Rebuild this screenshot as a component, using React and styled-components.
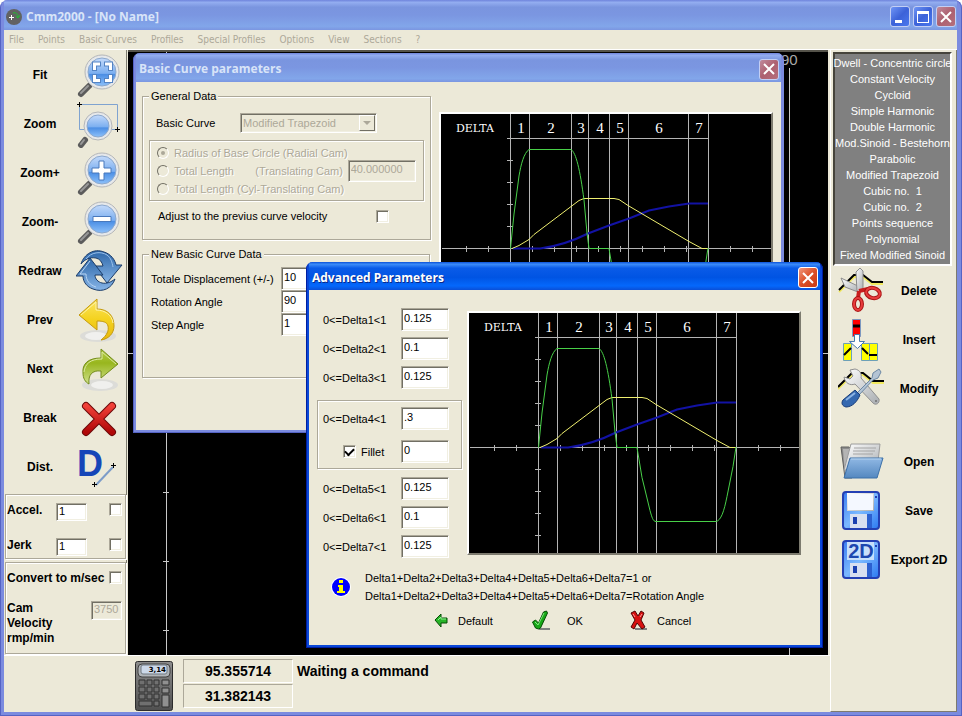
import React from 'react';
import styled, { createGlobalStyle, css } from 'styled-components';

const GlobalStyle = createGlobalStyle`
  * {
    box-sizing: border-box;
  }
  body {
    margin: 0;
    background: #fff;
    color: #000;
    font-family: 'Liberation Sans', Arial, sans-serif;
    font-size: 11px;
    line-height: 14px;
  }
  button, input, select {
    font: inherit;
    color: inherit;
  }
`;

const face = '#ece9d8';
const shade = '#aca899';

const etched = css`
  border: 1px solid ${shade};
  box-shadow: 1px 1px 0 #fff, inset 1px 1px 0 #fff;
`;

const sunken = css`
  border: 1px solid;
  border-color: ${shade} #fff #fff ${shade};
  box-shadow: inset 1px 1px 0 #716f64, inset -1px -1px 0 #f1efe2;
`;

const Shell = styled.div`
  display: flex;
  flex-direction: column;
  min-height: 100vh;
  padding: 0 5px 4px 4px;
  border-radius: 8px 8px 0 0;
  background: #7b8bdf;
  box-shadow: inset 1px -1px 0 #5563c4, inset -1px 0 0 #5563c4;
  overflow: hidden;
`;

const TitleBar = styled.header`
  display: flex;
  align-items: center;
  gap: 4px;
  height: ${(props) => (props.$main ? 30 : props.$active ? 28 : 29)}px;
  padding: ${(props) => (props.$main ? '3px 1px 0 2px' : '3px 2px 0 3px')};
  background: ${(props) =>
    props.$active
      ? 'linear-gradient(#0a50d8, #3c8cf8 8%, #0a5be8 22%, #0054e3 55%, #0468fc 85%, #0a4fd8)'
      : 'linear-gradient(#6f84dc, #93adf0 8%, #7a95df 24%, #7b96e1 50%, #82a6ea 88%, #7b96e1)'};
`;

const TitleText = styled.h1`
  flex: 1;
  margin: 0;
  color: ${(props) => (props.$active ? '#fff' : '#d8e4f8')};
  font-family: 'Open Sans', 'Noto Sans', sans-serif;
  font-size: 12px;
  font-weight: 700;
  line-height: 16px;
  text-shadow: ${(props) => (props.$active ? '1px 1px 0 #0a2a8a' : 'none')};
`;

const captionColors = {
  blue: 'linear-gradient(135deg, #6f95f5, #3c62d8 50%, #4a78ee)',
  faded: 'linear-gradient(135deg, #c08a9c, #ad6070 50%, #b5707c)',
  red: 'linear-gradient(135deg, #f0977c, #dc4f28 50%, #c83a14)',
};

const CaptionButton = styled.button`
  display: grid;
  place-items: center;
  width: 20px;
  height: 21px;
  padding: 0;
  border: 1px solid ${(props) => (props.$tone === 'red' ? '#fff' : '#c3cff4')};
  border-radius: 3px;
  background: ${(props) => captionColors[props.$tone]};
`;

const CaptionGroup = styled.div`
  display: flex;
  gap: 3px;
`;

const MenuBar = styled.nav`
  display: flex;
  gap: 14px;
  height: 19px;
  padding: 2px 5px;
  background: ${face};
`;

const MenuButton = styled.button`
  padding: 0;
  border: 0;
  background: none;
  color: ${shade};
  font-family: 'DejaVu Sans Condensed', 'DejaVu Sans', sans-serif;
  font-size: 10px;
  white-space: nowrap;
`;

const Body = styled.div`
  flex: 1;
  display: flex;
  background: ${face};
  border-top: 1px solid #fff;
`;

const Main = styled.main`
  flex: 1;
  display: flex;
  flex-direction: column;
  min-width: 0;
`;

const Work = styled.div`
  flex: 1;
  display: flex;
`;

const Sidebar = styled.aside`
  display: flex;
  flex-direction: column;
  width: 123px;
  border-right: 1px solid #7d7b6f;
`;

const ToolButton = styled.button`
  display: grid;
  grid-template-columns: ${(props) => props.$columns};
  align-items: center;
  width: 100%;
  height: 49px;
  padding: 0;
  border: 0;
  background: none;
  font-size: 12px;
  font-weight: 700;
  text-align: center;

  svg {
    display: block;
  }
`;

const Panel = styled.section`
  ${etched}
  display: flex;
  flex-direction: column;
  gap: ${(props) => props.$gap}px;
  margin: 3px 0 0 1px;
  padding: ${(props) => props.$pad};
  font-size: 12px;
  font-weight: 700;
  line-height: 15px;
`;

const PanelRow = styled.div`
  display: flex;
  align-items: flex-start;

  > :last-child {
    margin-left: auto;
  }
`;

const PanelLabel = styled.label`
  width: ${(props) => props.$width}px;
`;

const TextBox = styled.input`
  ${sunken}
  width: ${(props) => props.$width}px;
  height: ${(props) => props.$height}px;
  padding: 0 2px 3px;
  border-radius: 0;
  background: #fff;
  font-size: 11px;
  font-weight: 400;
  outline: none;

  &:disabled {
    background: ${face};
    color: ${shade};
  }
`;

const Check = styled.input.attrs({ type: 'checkbox' })`
  ${sunken}
  appearance: none;
  display: grid;
  place-items: center;
  width: 13px;
  height: 13px;
  margin: 0;
  background: #fff;

  &:checked::before {
    content: '';
    width: 7px;
    height: 4px;
    margin-top: -2px;
    border: solid #000;
    border-width: 0 0 2px 2px;
    transform: rotate(-45deg);
  }
`;

const Canvas = styled.div`
  position: relative;
  flex: 1;
  min-height: 604px;
  margin: 0 2px 0 1px;
  border-top: 2px solid #55534a;
  background: #000;
  overflow: hidden;
`;

const Backdrop = styled.svg`
  position: absolute;
  top: 0;
  left: 0;
  width: 100%;
  height: 100%;
`;

const Dialog = styled.section`
  position: absolute;
  top: ${(props) => props.$top}px;
  left: ${(props) => props.$left}px;
  padding: 0 3px 3px;
  border-radius: 7px 7px 0 0;
  background: ${(props) => (props.$active ? '#0a48d8' : '#7b8bdf')};
  box-shadow: ${(props) =>
    props.$active ? 'inset 1px -1px 0 #001ea0, inset -1px 0 0 #001ea0' : 'inset 1px -1px 0 #5563c4'};
  overflow: hidden;
`;

const BasicBody = styled.div`
  display: flex;
  gap: 8px;
  padding: 7px 8px 52px 6px;
  background: ${face};
`;

const Column = styled.div`
  display: flex;
  flex-direction: column;
  gap: ${(props) => props.$gap}px;
`;

const Group = styled.fieldset`
  ${etched}
  width: 288px;
  height: ${(props) => props.$height}px;
  margin: 0;
  padding: ${(props) => props.$top}px 6px 0;

  legend {
    padding: 0 2px;
    background: ${face};
  }
`;

const SelectRow = styled.div`
  display: grid;
  grid-template-columns: 84px 137px;
  align-items: center;
  padding-left: 7px;
`;

const SelectBox = styled.div`
  ${sunken}
  display: flex;
  height: 20px;
  padding: 1px;

  select {
    appearance: none;
    flex: 1;
    min-width: 0;
    padding: 0 0 0 1px;
    border: 0;
    background: transparent;
    color: ${shade};
    opacity: 1;
  }
`;

const DropMark = styled.span`
  display: grid;
  place-items: center;
  width: 16px;
  border: 1px solid;
  border-color: #fff #716f64 #716f64 #fff;
`;

const RadioBox = styled.div`
  ${etched}
  display: flex;
  align-items: center;
  justify-content: space-between;
  margin-top: 7px;
  padding: 3px 7px;
  height: 61px;
`;

const RadioLabel = styled.label`
  display: flex;
  align-items: center;
  gap: 5px;
  height: 18px;
  color: ${shade};
  text-shadow: 1px 1px 0 #fff;
  white-space: pre;

  input {
    appearance: none;
    display: grid;
    place-items: center;
    width: 12px;
    height: 12px;
    margin: 0;
    border: 1px solid;
    border-color: #716f64 #fff #fff #716f64;
    border-radius: 50%;
  }
  input:checked::before {
    content: '';
    width: 4px;
    height: 4px;
    border-radius: 50%;
    background: ${shade};
  }
`;

const AdjustRow = styled.div`
  display: flex;
  align-items: center;
  justify-content: space-between;
  padding: 8px 35px 0 9px;
`;

const FieldRow = styled.div`
  display: grid;
  grid-template-columns: ${(props) => props.$label}px auto;
  align-items: center;
  justify-content: start;
  padding-left: ${(props) => props.$indent}px;
  white-space: nowrap;
`;

const PlotFrame = styled.figure`
  align-self: flex-start;
  margin: ${(props) => props.$top}px 0 0;
  border: 2px solid;
  border-color: #fff #7d7b6f #7d7b6f #fff;

  svg {
    display: block;
    background: #000;
  }
`;

const AdvancedBody = styled.div`
  padding: 18px 19px 13px 8px;
  background: ${face};
`;

const AdvancedTop = styled.div`
  display: flex;
  gap: 5px;
`;

const FilletBox = styled.div`
  ${etched}
  display: flex;
  flex-direction: column;
  gap: 10px;
  width: 145px;
  margin: 5px 0 2px;
  padding: 6px 0 5px;
`;

const FilletLabel = styled.label`
  display: flex;
  align-items: center;
  gap: 5px;
  padding-left: 20px;
`;

const Note = styled.div`
  display: flex;
  align-items: center;
  gap: 14px;
  padding: 11px 0 0 14px;

  p {
    margin: 0;
    line-height: 18px;
  }
`;

const ActionBar = styled.div`
  display: flex;
  padding: 5px 0 0 117px;
`;

const ActionButton = styled.button`
  display: flex;
  align-items: center;
  gap: ${(props) => props.$gap}px;
  width: 98px;
  height: 22px;
  padding: 0;
  border: 0;
  background: none;
`;

const StatusBar = styled.footer`
  display: flex;
  align-items: flex-start;
  gap: 4px;
  height: 57px;
  padding: 3px 0 0 131px;
  border-top: 1px solid #fff;
  font-size: 14px;
  font-weight: 700;
`;

const CalcButton = styled.button`
  margin: 2px 6px 0 0;
  padding: 0;
  border: 0;
  background: none;

  svg {
    display: block;
  }
`;

const Readouts = styled.div`
  display: flex;
  flex-direction: column;
  gap: 1px;
`;

const Readout = styled.output`
  width: 110px;
  height: 24px;
  border: 1px solid;
  border-color: ${shade} #fff #fff ${shade};
  line-height: 22px;
  text-align: center;
`;

const Message = styled.span`
  line-height: 24px;
`;

const RightPanel = styled.aside`
  width: 127px;
  padding: 2px 4px 0 2px;
  border-left: 1px solid #fff;
  border-right: 1px solid #7d7b6f;
  border-bottom: 1px solid #7d7b6f;
`;

const CurveList = styled.ul`
  margin: 0;
  padding: 1px 0;
  border: 2px solid;
  border-color: #46443c #fff #fff #46443c;
  background: #808080;
  list-style: none;

  li {
    display: flex;
    justify-content: center;
  }
  button {
    flex: none;
    height: 16px;
    padding: 0;
    border: 0;
    background: none;
    color: #fff;
    white-space: pre;
  }
`;

const FileTools = styled.div`
  margin-top: 24px;
`;

const HiddenDefs = styled.svg`
  position: absolute;
`;

const Cross = ({ x, y }) => (
  <path d={`M${x - 2} ${y + 0.5}h5M${x + 0.5} ${y - 2}v5`} stroke="#000" fill="none" shapeRendering="crispEdges" />
);

const Gradients = () => (
  <HiddenDefs width="0" height="0" aria-hidden="true">
    <defs>
      <linearGradient id="lens" x2="0" y2="1">
        <stop offset="0" stopColor="#c4dafa" />
        <stop offset="0.55" stopColor="#7aaef0" />
        <stop offset="0.58" stopColor="#4b8ee4" />
        <stop offset="1" stopColor="#8cc0fa" />
      </linearGradient>
      <linearGradient id="blueArrow" x2="0" y2="1">
        <stop offset="0" stopColor="#2c66a8" />
        <stop offset="1" stopColor="#86b4e6" />
      </linearGradient>
      <linearGradient id="yellowArrow" x2="0" y2="1">
        <stop offset="0" stopColor="#fbe560" />
        <stop offset="0.5" stopColor="#f4d21e" />
        <stop offset="1" stopColor="#e8b80c" />
      </linearGradient>
      <linearGradient id="greenArrow" x2="0" y2="1">
        <stop offset="0" stopColor="#b6cf48" />
        <stop offset="0.4" stopColor="#98b61e" />
        <stop offset="1" stopColor="#cfe08a" />
      </linearGradient>
      <linearGradient id="redCross" x2="0" y2="1">
        <stop offset="0" stopColor="#f04038" />
        <stop offset="1" stopColor="#b00808" />
      </linearGradient>
      <linearGradient id="steel" x2="1" y2="1">
        <stop offset="0" stopColor="#ffffff" />
        <stop offset="1" stopColor="#a8acb0" />
      </linearGradient>
      <linearGradient id="disk" x2="1" y2="1">
        <stop offset="0" stopColor="#3a7cf0" />
        <stop offset="0.5" stopColor="#7ab8ff" />
        <stop offset="1" stopColor="#2a78f0" />
      </linearGradient>
      <linearGradient id="folder" x2="0" y2="1">
        <stop offset="0" stopColor="#90b8e4" />
        <stop offset="1" stopColor="#5488c0" />
      </linearGradient>
      <linearGradient id="calc" x2="0" y2="1">
        <stop offset="0" stopColor="#8c8c8c" />
        <stop offset="1" stopColor="#505050" />
      </linearGradient>
    </defs>
  </HiddenDefs>
);

const Icon = ({ children }) => (
  <svg width="48" height="48" viewBox="0 0 48 48" aria-hidden="true">
    {children}
  </svg>
);

const Lens = ({ cx = 26, cy = 21, r = 17, children }) => (
  <>
    <path d={`M${cx - 13} ${cy + 14}L5 ${cy + r + 5}`} stroke="#5c5c5c" strokeWidth="6" strokeLinecap="round" />
    <path d={`M${cx - 14} ${cy + 14}L5 ${cy + r + 4}`} stroke="#989898" strokeWidth="2" strokeLinecap="round" />
    <circle cx={cx} cy={cy} r={r} fill="#e6e8ea" stroke="#b4b6b8" />
    <circle cx={cx} cy={cy} r={r - 3} fill="url(#lens)" stroke="#8ca8cc" />
    {children}
  </>
);

const FitIcon = () => (
  <Icon>
    <Lens>
      <g fill="none" stroke="#5484c4" strokeWidth="5">
        <path d="M18.500 20v-7H25M28 13h6.500v7M34.500 23v6.500H28M25 29.500h-6.500V23" />
      </g>
      <g fill="none" stroke="#fff" strokeWidth="3">
        <path d="M18.500 19v-6H24M29 13h5.500v6M34.500 24v5.500H29M24 29.500h-5.500V24" />
      </g>
    </Lens>
  </Icon>
);

const ZoomIcon = () => (
  <Icon>
    <path d="M3.500 4.500h38v25h-38z" fill="none" stroke="#7fa3d0" />
    <Lens cx={22} cy={26} r={14} />
    <Cross x={3} y={4} />
    <Cross x={41} y={29} />
  </Icon>
);

const ZoomInIcon = () => (
  <Icon>
    <Lens>
      <path d="M23 12h5v7h7v5h-7v7h-5v-7h-7v-5h7z" fill="#fff" stroke="#4878bc" />
    </Lens>
  </Icon>
);

const ZoomOutIcon = () => (
  <Icon>
    <Lens>
      <path d="M17 18.500h18v5h-18z" fill="#fff" stroke="#4878bc" />
    </Lens>
  </Icon>
);

const RedrawIcon = () => (
  <Icon>
    <g fill="url(#blueArrow)" stroke="#1c3c68" strokeLinejoin="round">
      <path d="M5 17C8 7 18 1 28 5c7 2 11 8 12 13h6L31 36 18 19h9c-1-4-3-7-7-8-6-1-11 1-15 6z" />
      <path d="M39 32c-3 9-12 14-22 10C11 40 7 35 7 29H0L14 11l13 17h-8c0 4 3 7 7 8 5 1 9-1 13-4z" />
    </g>
    <path d="M10 12c5-7 15-8 21-4 4 3 5 7 6 12" fill="none" stroke="#9cc2ec" />
    <path d="M14 14l-10 13h6c0 7 4 11 10 13" fill="none" stroke="#b8d4f2" />
  </Icon>
);

const PrevIcon = () => (
  <Icon>
    <ellipse cx="22" cy="40" rx="18" ry="6" fill="#dcdcd8" />
    <ellipse cx="20" cy="40" rx="11" ry="4" fill="#f0f0ee" />
    <path
      d="M3 19L21 3v10c11 0 17 7 17 17 0 7-5 13-13 14 6-5 8-9 7-14-1-4-5-5-11-5v9z"
      fill="url(#yellowArrow)"
      stroke="#c49a10"
      strokeLinejoin="round"
    />
    <path d="M5 19L20 6v8c9 0 16 5 17 13" fill="none" stroke="#fdf3a8" />
  </Icon>
);

const NextIcon = () => (
  <Icon>
    <ellipse cx="24" cy="40" rx="18" ry="6" fill="#dcdcd8" />
    <ellipse cx="26" cy="40" rx="11" ry="4" fill="#f0f0ee" />
    <path
      d="M42 19L25 4v9C12 13 6 19 7 28c0 5 2 9 6 11-1-9 3-14 12-13v7z"
      fill="url(#greenArrow)"
      stroke="#748c1c"
      strokeLinejoin="round"
    />
    <path d="M40 19L26 7v7C14 14 9 19 8 27" fill="none" stroke="#dbe8a0" />
  </Icon>
);

const BreakIcon = () => (
  <Icon>
    <path d="M10 12l26 26M36 12L10 38" stroke="#6c0808" strokeWidth="8" strokeLinecap="round" />
    <path d="M10 12l26 26M36 12L10 38" stroke="url(#redCross)" strokeWidth="6" strokeLinecap="round" />
  </Icon>
);

const DistIcon = () => (
  <Icon>
    <text x="1" y="33" fill="#1646b8" fontFamily="Liberation Sans, sans-serif" fontSize="36" fontWeight="700">
      D
    </text>
    <path d="M20 42l17-18" stroke="#7c9cc8" strokeWidth="2" />
    <Cross x={37} y={22} />
    <Cross x={18} y={41} />
  </Icon>
);

const Profile = ({ d }) => (
  <>
    <path d={d} transform="translate(0 2)" fill="none" stroke="#f2ea60" strokeWidth="2" />
    <path d={d} fill="none" stroke="#000" strokeWidth="2" />
  </>
);

const DeleteIcon = () => (
  <Icon>
    <Profile d="M1 23L16 8h9l9 7h11" />
    <path d="M3 11l19 9-2 5-13-5z" fill="url(#steel)" stroke="#8c8c8c" />
    <path d="M18 5l4-4 3 3v19l-6 2z" fill="url(#steel)" stroke="#8c8c8c" />
    <path d="M21 24l9-2M21 24l-1 7" stroke="#c81e1e" strokeWidth="4" />
    <ellipse cx="35" cy="26" rx="7" ry="5" transform="rotate(15 35 26)" fill="none" stroke="#a81414" strokeWidth="4" />
    <ellipse cx="35" cy="26" rx="7" ry="5" transform="rotate(15 35 26)" fill="none" stroke="#e83c3c" strokeWidth="2" />
    <ellipse cx="20" cy="37" rx="4" ry="6" fill="none" stroke="#a81414" strokeWidth="4" />
    <ellipse cx="20" cy="37" rx="4" ry="6" fill="none" stroke="#e83c3c" strokeWidth="2" />
  </Icon>
);

const InsertIcon = () => (
  <Icon>
    <path d="M14.500 3.500h8v17h-8z" fill="#f00" stroke="#7c98c0" />
    <path d="M15 10h7" stroke="#000" strokeWidth="3" />
    <path d="M5.500 27.500h8v17h-8zM23.500 27.500h8v17h-8zM31.500 27.500h8v17h-8z" fill="#ff0" stroke="#6ca0b8" />
    <path d="M6 39l7-7M24 32l6 6M31 39h8" stroke="#000" strokeWidth="2" />
    <path d="M16.500 18.500h5v7h5l-7 7-8-7h5z" fill="#fff" stroke="#4878b0" />
  </Icon>
);

const ModifyIcon = () => (
  <Icon>
    <Profile d="M0 22L14 8h11l10 8h11" />
    <path
      d="M12 5l5-1c5 1 7 5 6 9l18 21c1 4-3 7-6 4L17 19c-5 2-10-1-11-7l6 2 3-3z"
      fill="url(#steel)"
      stroke="#909090"
    />
    <circle cx="38" cy="36" r="1" fill="#707070" />
    <path d="M19 28L34 13l1-5 6-4 2 3-3 6-5 2-14 15z" fill="#b4c4d4" stroke="#6c88a4" />
    <path d="M17 25l5 5c-3 7-8 12-14 12-4-1-5-4-3-7z" fill="#3468b0" stroke="#183c78" />
    <path d="M17 28L8 35" stroke="#8cb4e4" strokeWidth="2" />
  </Icon>
);

const OpenIcon = () => (
  <Icon>
    <path d="M3 9h8l3 3v28H7z" fill="#8c8c8c" stroke="#606060" />
    <path d="M5 11h6v22l-4 4z" fill="#b4b4b4" />
    <path d="M13 6h29l-3 26H6z" fill="url(#steel)" stroke="#9c9c9c" />
    <path d="M16 10h22M15 13h22M15 16h20" stroke="#a4a4a4" />
    <path d="M12 20h33l-6 20H6z" fill="url(#folder)" stroke="#3c70a8" strokeLinejoin="round" />
    <path d="M13 21h30" stroke="#b8d4f0" />
  </Icon>
);

const DiskIcon = ({ label }) => (
  <Icon>
    <rect x="5" y="5" width="36" height="37" rx="3" fill="url(#disk)" stroke="#2440b4" strokeWidth="2" />
    <path d="M9 6h27v18H9z" fill={label ? '#c8e0fa' : 'url(#steel)'} />
    {!label && <path d="M10 7h25v16H10z" fill="#f4f8ff" />}
    <path d="M12 27h22v14H12z" fill="#d8dff0" />
    <path d="M29 27h5v14h-5z" fill="#2c60d0" />
    <path d="M15 30h4v7h-4z" fill="#1c40b0" />
    <path d="M37 9h2v2h-2z" fill="#2440b4" />
    {label && (
      <text
        x="23"
        y="22"
        textAnchor="middle"
        fill="#1c48b0"
        fontFamily="Liberation Sans, sans-serif"
        fontSize="20"
        fontWeight="700"
      >
        {label}
      </text>
    )}
  </Icon>
);

const AppIcon = () => (
  <svg width="16" height="16" viewBox="0 0 16 16" aria-hidden="true">
    <circle cx="8" cy="8" r="8" fill="#626262" />
    <path d="M3 8.500h5M5.500 6v5" stroke="#fff" fill="none" />
    <path d="M7 4c3-1 5 1 5 4M9.500 7L12 9l2-3" stroke="#20c030" fill="none" />
  </svg>
);

const CalcIcon = () => (
  <svg width="38" height="50" viewBox="0 0 38 50" aria-hidden="true">
    <rect x="0.5" y="0.5" width="37" height="49" rx="2" fill="url(#calc)" stroke="#2c2c2c" />
    <rect x="3" y="3" width="32" height="13" rx="4" fill="#b0b4b8" stroke="#404040" />
    <rect x="6" y="4" width="26" height="9" rx="2" fill="#ccd8e8" stroke="#707880" />
    <text x="31" y="11" textAnchor="end" fontFamily="DejaVu Sans, sans-serif" fontSize="7" fontWeight="700">
      3,14
    </text>
    <path
      d="M4 19h6v5H4zM12 19h5v5h-5zM19 19h5v5h-5zM4 26h6v5H4zM12 26h5v5h-5zM19 26h5v5h-5zM4 33h6v5H4zM12 33h5v5h-5zM19 33h5v5h-5zM4 40h13v5H4zM19 40h5v5h-5z"
      fill="#707070"
      stroke="#303030"
    />
    <path d="M27 19h7v5h-7zM27 27h7v5h-7zM27 34h7v12h-7z" fill="#909090" stroke="#303030" />
  </svg>
);

const CloseGlyph = () => (
  <svg width="12" height="12" viewBox="0 0 12 12" aria-hidden="true">
    <path d="M1 1l10 10M11 1L1 11" stroke="#fff" strokeWidth="2" />
  </svg>
);

const InfoIcon = () => (
  <svg width="20" height="20" viewBox="0 0 20 20" aria-hidden="true">
    <circle cx="10" cy="10" r="10" fill="#fff" />
    <circle cx="10" cy="10" r="9" fill="#00f" />
    <path d="M8 3h4v3H8zM7 8h5v6h2v2H6v-2h2v-4H7z" fill="#ff0" />
  </svg>
);

const DefaultIcon = () => (
  <svg width="20" height="22" viewBox="0 0 20 22" aria-hidden="true">
    <path d="M1 10l6-6v4h6v5H7v4z" fill="#28b428" stroke="#044c04" />
    <path d="M4 10l3-3v2h5" fill="none" stroke="#90f090" />
  </svg>
);

const OkIcon = () => (
  <svg width="20" height="22" viewBox="0 0 20 22" aria-hidden="true">
    <path d="M7 19h11" stroke="#808080" strokeWidth="2" />
    <path d="M0.500 12l3-2 3 3 5-11 3-1 1 2-7 15-2 1-3-1z" fill="#18a818" stroke="#044c04" />
    <path d="M3 12l3 3 6-12" fill="none" stroke="#80e880" />
  </svg>
);

const CancelIcon = () => (
  <svg width="20" height="22" viewBox="0 0 20 22" aria-hidden="true">
    <path d="M5 19h12" stroke="#808080" strokeWidth="2" />
    <path
      d="M1 3l4-2 3 5 3-5 3 2-3 7 4 7-3 2-5-6-3 6-3-2 4-7z"
      fill="#d81010"
      stroke="#500404"
      strokeLinejoin="round"
    />
    <path d="M3 4l2 3M12 4l-2 3" stroke="#ff9c9c" />
  </svg>
);

const columns = [69, 88, 130, 147, 168, 187, 247, 267];
const xTicks = [25, 47, 91, 113, 135, 157, 179, 201, 223, 245, 289, 311];
const yTicks = [46, 68, 90, 112, 156, 178, 200, 222];

const CurvePlot = ({ top }) => (
  <PlotFrame $top={top}>
    <svg width="330" height="240" viewBox="0 0 330 240" role="img" aria-label="Curve diagram">
      <g stroke="#b4b4b4" fill="none" shapeRendering="crispEdges">
        {columns.map((x) => (
          <path key={x} d={`M${x + 0.5} 0v240`} />
        ))}
        <path d="M66 24.500h202M1 134.500h329" />
        {xTicks.map((x) => (
          <path key={x} d={`M${x + 0.5} 132v6`} />
        ))}
        {yTicks.map((y) => (
          <path key={y} d={`M66 ${y + 0.5}h6`} />
        ))}
      </g>
      <g fill="none">
        <path d="M72 134.500h27c16-2 34-8 48-15l21-8 20-7 20-8 20-4 20-3 19 0" stroke="#1212a4" strokeWidth="2" />
        <path d="M71 134.500l7-3 10-6 5-5 45-34 5-2h30l5 1 9 6 61 36 13 7h6" stroke="#f0f070" />
        <path
          d="M69.500 134.500L73 100l5-38c2-12 5-23 10-26.500h42c5 3 9 20 13 50.500l3 33 2 15.500h20l5 30 8 33c2 7 3 11 6 11h60c5-1 8-10 11-25l6-30 3-19.500"
          stroke="#48d048"
        />
      </g>
      <text x="15" y="18" fill="#fff" fontFamily="DejaVu Serif, serif" fontSize="11">
        DELTA
      </text>
      <g fill="#fff" fontFamily="Liberation Serif, serif" fontSize="15" textAnchor="middle">
        {columns.slice(1).map((x, i) => (
          <text key={x} x={Math.round((x + columns[i]) / 2) + 1} y="19">
            {i + 1}
          </text>
        ))}
      </g>
    </svg>
  </PlotFrame>
);

const menus = ['File', 'Points', 'Basic Curves', 'Profiles', 'Special Profiles', 'Options', 'View', 'Sections', '?'];

const tools = [
  ['Fit', FitIcon],
  ['Zoom', ZoomIcon],
  ['Zoom+', ZoomInIcon],
  ['Zoom-', ZoomOutIcon],
  ['Redraw', RedrawIcon],
  ['Prev', PrevIcon],
  ['Next', NextIcon],
  ['Break', BreakIcon],
  ['Dist.', DistIcon],
];

const curves = [
  'Dwell - Concentric circle',
  'Constant Velocity',
  'Cycloid',
  'Simple Harmonic',
  'Double Harmonic',
  'Mod.Sinoid - Bestehorn',
  'Parabolic',
  'Modified Trapezoid',
  'Cubic no.  1',
  'Cubic no.  2',
  'Points sequence',
  'Polynomial',
  'Fixed Modified Sinoid',
];

const bases = [
  'Radius of Base Circle (Radial Cam)',
  'Total Length       (Translating Cam)',
  'Total Length (Cyl-Translating Cam)',
];

const newData = [
  { id: 'displacement', label: 'Totale Displacement (+/-)', value: '10' },
  { id: 'rotation', label: 'Rotation Angle', value: '90' },
  { id: 'step', label: 'Step Angle', value: '1' },
];

const RightTool = ({ name, children }) => (
  <ToolButton type="button" $columns="5px 48px 1fr">
    <span />
    {children}
    {name}
  </ToolButton>
);

const SideTools = () => (
  <Sidebar>
    {tools.map(([name, Glyph]) => (
      <ToolButton key={name} type="button" $columns="72px 48px">
        {name}
        <Glyph />
      </ToolButton>
    ))}
    <Panel $gap={17} $pad="8px 3px 2px 1px">
      <PanelRow>
        <PanelLabel htmlFor="accel" $width={49}>
          Accel.
        </PanelLabel>
        <TextBox id="accel" $width={31} $height={18} defaultValue="1" />
        <Check aria-label="Accel." />
      </PanelRow>
      <PanelRow>
        <PanelLabel htmlFor="jerk" $width={49}>
          Jerk
        </PanelLabel>
        <TextBox id="jerk" $width={31} $height={18} defaultValue="1" />
        <Check aria-label="Jerk" />
      </PanelRow>
    </Panel>
    <Panel $gap={15} $pad="8px 3px 7px 1px">
      <PanelRow>
        <label htmlFor="convert">Convert to m/sec</label>
        <Check id="convert" />
      </PanelRow>
      <PanelRow>
        <PanelLabel htmlFor="velocity" $width={60}>
          Cam Velocity rmp/min
        </PanelLabel>
        <TextBox id="velocity" $width={31} $height={19} defaultValue="3750" disabled />
      </PanelRow>
    </Panel>
  </Sidebar>
);

const DeltaField = ({ index, value, indent = 6 }) => (
  <FieldRow $label={78} $indent={indent}>
    <label htmlFor={`delta${index}`}>{`0<=Delta${index}<1`}</label>
    <TextBox id={`delta${index}`} $width={48} $height={23} defaultValue={value} />
  </FieldRow>
);

const BasicDialog = () => (
  <Dialog $top={1} $left={5}>
    <TitleBar>
      <TitleText as="h2">Basic Curve parameters</TitleText>
      <CaptionButton type="button" $tone="faded" aria-label="Close">
        <CloseGlyph />
      </CaptionButton>
    </TitleBar>
    <BasicBody>
      <Column $gap={7}>
        <Group $height={151} $top={10}>
          <legend>General Data</legend>
          <SelectRow>
            <label htmlFor="curve">Basic Curve</label>
            <SelectBox>
              <select id="curve" disabled>
                <option>Modified Trapezoid</option>
              </select>
              <DropMark>
                <svg width="8" height="4" viewBox="0 0 8 4">
                  <path d="M0 0h8L4 4z" fill={shade} />
                </svg>
              </DropMark>
            </SelectBox>
          </SelectRow>
          <RadioBox>
            <div>
              {bases.map((name, i) => (
                <RadioLabel key={name}>
                  <input type="radio" name="base" defaultChecked={i === 0} disabled />
                  {name}
                </RadioLabel>
              ))}
            </div>
            <TextBox aria-label="Length" $width={68} $height={22} defaultValue="40.000000" disabled />
          </RadioBox>
          <AdjustRow>
            <label htmlFor="adjust">Adjust to the previus curve velocity</label>
            <Check id="adjust" />
          </AdjustRow>
        </Group>
        <Group $height={131} $top={6}>
          <legend>New Basic Curve Data</legend>
          {newData.map(({ id, label, value }) => (
            <FieldRow key={id} $label={130} $indent={2}>
              <label htmlFor={id}>{label}</label>
              <TextBox id={id} $width={68} $height={23} defaultValue={value} />
            </FieldRow>
          ))}
        </Group>
      </Column>
      <CurvePlot top={23} />
    </BasicBody>
  </Dialog>
);

const AdvancedDialog = () => (
  <Dialog $top={210} $left={178} $active>
    <TitleBar $active>
      <TitleText as="h2" $active>
        Advanced Parameters
      </TitleText>
      <CaptionButton type="button" $tone="red" aria-label="Close">
        <CloseGlyph />
      </CaptionButton>
    </TitleBar>
    <AdvancedBody>
      <AdvancedTop>
        <Column $gap={6}>
          <DeltaField index={1} value="0.125" />
          <DeltaField index={2} value="0.1" />
          <DeltaField index={3} value="0.125" />
          <FilletBox>
            <DeltaField index={4} value=".3" indent={5} />
            <FieldRow $label={78} $indent={5}>
              <FilletLabel>
                <Check defaultChecked />
                Fillet
              </FilletLabel>
              <TextBox aria-label="Fillet" $width={48} $height={23} defaultValue="0" />
            </FieldRow>
          </FilletBox>
          <DeltaField index={5} value="0.125" />
          <DeltaField index={6} value="0.1" />
          <DeltaField index={7} value="0.125" />
        </Column>
        <CurvePlot top={3} />
      </AdvancedTop>
      <Note>
        <InfoIcon />
        <p>
          Delta1+Delta2+Delta3+Delta4+Delta5+Delta6+Delta7=1 or
          <br />
          Delta1+Delta2+Delta3+Delta4+Delta5+Delta6+Delta7=Rotation Angle
        </p>
      </Note>
      <ActionBar>
        <ActionButton type="button" $gap={4}>
          <DefaultIcon />
          Default
        </ActionButton>
        <ActionButton type="button" $gap={15}>
          <OkIcon />
          OK
        </ActionButton>
        <ActionButton type="button" $gap={7}>
          <CancelIcon />
          Cancel
        </ActionButton>
      </ActionBar>
    </AdvancedBody>
  </Dialog>
);

const App = () => (
  <Shell>
    <GlobalStyle />
    <Gradients />
    <TitleBar $main>
      <AppIcon />
      <TitleText>Cmm2000 - [No Name]</TitleText>
      <CaptionGroup>
        <CaptionButton type="button" $tone="blue" aria-label="Minimize">
          <svg width="12" height="12" viewBox="0 0 12 12">
            <path d="M1 9h7v3H1z" fill="#fff" />
          </svg>
        </CaptionButton>
        <CaptionButton type="button" $tone="blue" aria-label="Maximize">
          <svg width="12" height="12" viewBox="0 0 12 12">
            <path d="M0 0h12v12H0zM1 3v8h10V3z" fill="#fff" fillRule="evenodd" />
          </svg>
        </CaptionButton>
        <CaptionButton type="button" $tone="faded" aria-label="Close">
          <CloseGlyph />
        </CaptionButton>
      </CaptionGroup>
    </TitleBar>
    <MenuBar>
      {menus.map((name) => (
        <MenuButton key={name} type="button">
          {name}
        </MenuButton>
      ))}
    </MenuBar>
    <Body>
      <Main>
        <Work>
          <SideTools />
          <Canvas>
            <Backdrop>
              <g stroke="#c8c8c8" fill="none" shapeRendering="crispEdges">
                <path d="M38.500 0v2000M661.500 16v2000M0 301.500h3000" />
                <path d="M35 440.500h6M35 509.500h6M35 578.500h6" />
              </g>
              <text x="653" y="13" fill="#a8a8a8" fontFamily="Liberation Sans, sans-serif" fontSize="15">
                90
              </text>
            </Backdrop>
            <BasicDialog />
            <AdvancedDialog />
          </Canvas>
        </Work>
        <StatusBar>
          <CalcButton type="button" aria-label="Calculator">
            <CalcIcon />
          </CalcButton>
          <Readouts>
            <Readout>95.355714</Readout>
            <Readout>31.382143</Readout>
          </Readouts>
          <Message>Waiting a command</Message>
        </StatusBar>
      </Main>
      <RightPanel>
        <CurveList>
          {curves.map((name) => (
            <li key={name}>
              <button type="button">{name}</button>
            </li>
          ))}
        </CurveList>
        <RightTool name="Delete">
          <DeleteIcon />
        </RightTool>
        <RightTool name="Insert">
          <InsertIcon />
        </RightTool>
        <RightTool name="Modify">
          <ModifyIcon />
        </RightTool>
        <FileTools>
          <RightTool name="Open">
            <OpenIcon />
          </RightTool>
          <RightTool name="Save">
            <DiskIcon />
          </RightTool>
          <RightTool name="Export 2D">
            <DiskIcon label="2D" />
          </RightTool>
        </FileTools>
      </RightPanel>
    </Body>
  </Shell>
);

export default App;
